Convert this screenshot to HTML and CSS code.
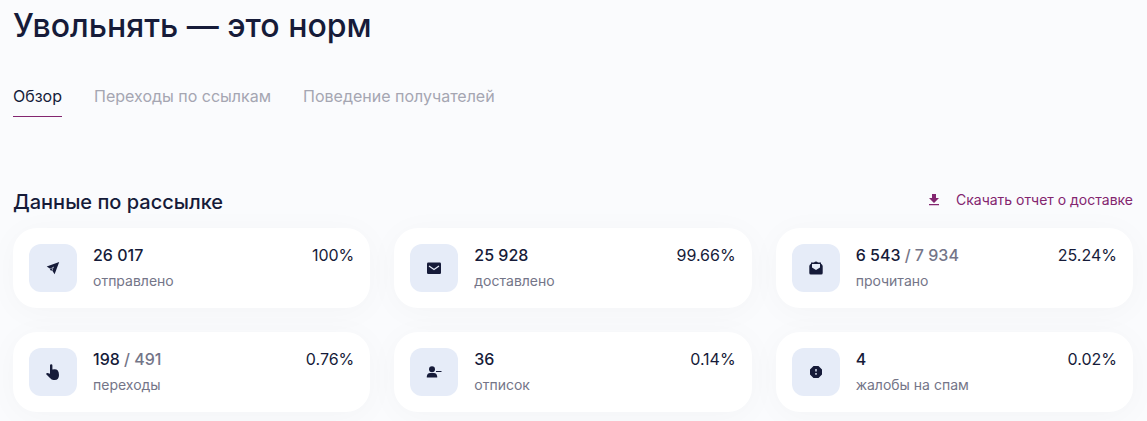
FILE: index.html
```html
<!DOCTYPE html>
<html lang="ru">
<head>
<meta charset="utf-8">
<meta name="viewport" content="width=device-width, initial-scale=1">
<title>Увольнять — это норм</title>
<link rel="stylesheet" href="styles.css">
</head>
<body>
<main class="page">
  <h1 class="title">Увольнять — это норм</h1>
  <nav class="tabs">
    <a class="tab tab-active" href="#overview" aria-current="page">Обзор</a>
    <a class="tab" href="#links">Переходы по ссылкам</a>
    <a class="tab" href="#behavior">Поведение получателей</a>
  </nav>
  <section class="report" id="overview">
    <header class="report-head">
      <h2 class="subtitle">Данные по рассылке</h2>
      <a class="download" href="#report">
        <svg class="icon" viewBox="0 0 16 16" aria-hidden="true"><path d="M6 2h4v4h3l-5 5-5-5h3zM3 12h10v1.200H3z"/></svg>
        Скачать отчет о доставке
      </a>
    </header>
    <div class="cards">
      <article class="card">
        <span class="badge"><svg class="icon" viewBox="0 0 16 16" aria-hidden="true"><path d="M14.200 2L1.700 6.600 5.200 8.800l3.800-2.200L7.200 10.600 9.600 14.200z"/><path d="M4.800 9.400L8 7.600 6.300 11z"/></svg></span>
        <div class="info"><p class="count">26 017</p><p class="label">отправлено</p></div>
        <span class="percent">100%</span>
      </article>
      <article class="card">
        <span class="badge"><svg class="icon" viewBox="0 0 16 16" aria-hidden="true"><rect x="1" y="2.500" width="14" height="11.500" rx="1.200"/><path class="line" d="M3 6l5 3.500L13 6"/></svg></span>
        <div class="info"><p class="count">25 928</p><p class="label">доставлено</p></div>
        <span class="percent">99.66%</span>
      </article>
      <article class="card">
        <span class="badge"><svg class="icon" viewBox="0 0 16 16" aria-hidden="true"><path fill-rule="evenodd" d="M1.300 6Q1.500 4.500 3 3.700V2.500h3Q8 .500 10 2.500h3v1.200Q14.500 4.500 14.700 6v7q0 1.500-1.500 1.500H2.800q-1.500 0-1.500-1.500zM4 4v3.500l4 2.500 4-2.500V4z"/></svg></span>
        <div class="info"><p class="count">6 543 <span class="total">/ 7 934</span></p><p class="label">прочитано</p></div>
        <span class="percent">25.24%</span>
      </article>
      <article class="card">
        <span class="badge"><svg class="icon" viewBox="0 0 16 16" aria-hidden="true"><path d="M5 1.500Q5 .300 6.200.300T7.400 1.500V5.500Q11 4.500 12.800 6.500 14 8 14 11 14 16 9.700 16H8.500Q6.500 16 5 14L1.200 10.300Q.900 9 2.600 9L5 9.800z"/></svg></span>
        <div class="info"><p class="count">198 <span class="total">/ 491</span></p><p class="label">переходы</p></div>
        <span class="percent">0.76%</span>
      </article>
      <article class="card">
        <span class="badge"><svg class="icon" viewBox="0 0 16 16" aria-hidden="true"><circle cx="6" cy="5.200" r="3"/><path d="M.800 13.500V12.300Q1.500 9 4 9h4q2.500 0 3.200 3.300v1.200zM10 6.900h5.500v1.200H10z"/></svg></span>
        <div class="info"><p class="count">36</p><p class="label">отписок</p></div>
        <span class="percent">0.14%</span>
      </article>
      <article class="card">
        <span class="badge"><svg class="icon" viewBox="0 0 16 16" aria-hidden="true"><path fill-rule="evenodd" d="M5.500 2h5L14 5.500v5L10.500 14h-5L2 10.500v-5zM7.300 5v2.600h1.400V5zM7.300 9v1.800h1.400V9z"/></svg></span>
        <div class="info"><p class="count">4</p><p class="label">жалобы на спам</p></div>
        <span class="percent">0.02%</span>
      </article>
    </div>
  </section>
</main>
</body>
</html>
```
FILE: styles.css
```css
* { box-sizing: border-box; }

body {
  margin: 0;
  background: #fafbfd;
  color: #161b39;
  font: 400 16px/24px Inter, "Noto Sans", sans-serif;
}

h1, h2, p { margin: 0; }
a { color: inherit; text-decoration: none; }

.page { padding: 6px 14px 9px 13px; }

.title {
  font-size: 32px;
  line-height: 40px;
  font-weight: 500;
}

.tabs {
  display: flex;
  gap: 32px;
  margin-top: 38px;
}

.tab {
  padding-bottom: 8px;
  border-bottom: 1px solid transparent;
  color: #a5a6b2;
}

.tab-active {
  border-bottom-color: #83256f;
  color: #161b39;
}

.report { margin-top: 71px; }

.report-head {
  display: flex;
  justify-content: space-between;
  align-items: flex-start;
}

.subtitle {
  font-size: 20px;
  line-height: 28px;
  font-weight: 500;
}

.download {
  display: flex;
  align-items: center;
  gap: 14px;
  color: #83256f;
  font-size: 14px;
}

.icon {
  width: 16px;
  height: 16px;
  fill: currentColor;
}

.line {
  fill: none;
  stroke: #e6ecf8;
  stroke-width: 1.2;
}

.cards {
  display: grid;
  grid-template-columns: repeat(3, 1fr);
  gap: 24px;
  margin-top: 12px;
}

.card {
  display: flex;
  gap: 16px;
  padding: 16px;
  border-radius: 24px;
  background: #fff;
  box-shadow: 0 4px 32px rgba(0, 0, 0, 0.03);
}

.badge {
  display: grid;
  place-items: center;
  flex: none;
  width: 48px;
  height: 48px;
  border-radius: 12px;
  background: #e6ecf8;
}

.info { flex: 1; }

.count,
.percent { line-height: 22px; }

.count { font-weight: 500; }
.total { color: #747588; }

.label {
  padding-top: 4px;
  color: #747588;
  font-size: 14px;
  line-height: 22px;
}
```
